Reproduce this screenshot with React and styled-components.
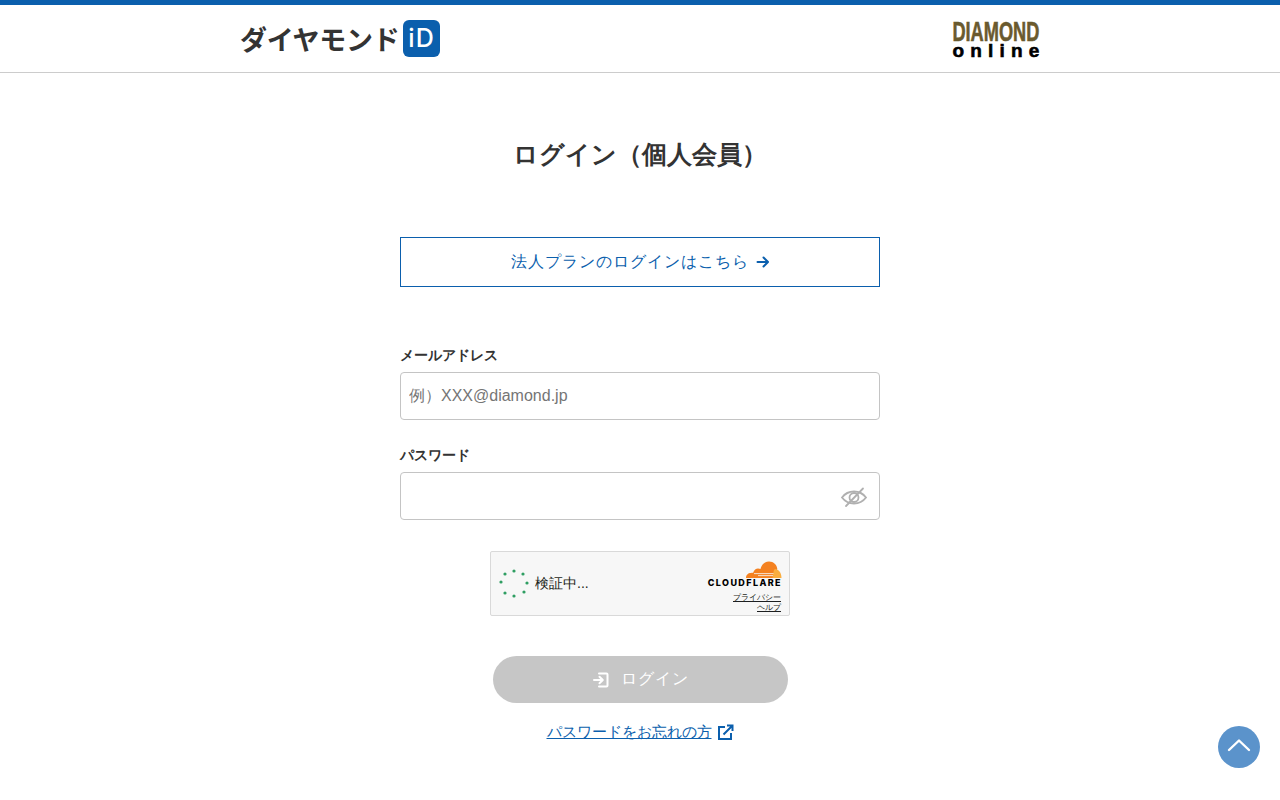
import React from "react";
import styled, { createGlobalStyle } from "styled-components";

const BLUE = "#0b5fad";
const FONT = `"Liberation Sans", sans-serif`;

const GlobalStyle = createGlobalStyle`
  html, body {
    margin: 0;
    padding: 0;
    background: #fff;
    color: #333;
    font-family: ${FONT};
  }
  * {
    box-sizing: border-box;
  }
`;

const Header = styled.header`
  height: 73px;
  border-top: 5px solid ${BLUE};
  border-bottom: 1px solid #ccc;
  display: flex;
  justify-content: center;
`;

const HeaderInner = styled.div`
  width: 800px;
  display: flex;
  align-items: center;
  justify-content: space-between;
`;

const IdLogo = styled.div`
  display: flex;
  align-items: center;
  gap: 5px;
  height: 37px;
`;

const IdLogoText = styled.span`
  width: 158px;
  padding-top: 1px;
  font-family: "Noto Sans CJK JP", sans-serif;
  font-size: 27px;
  line-height: 36px;
  font-weight: 700;
  color: #333;
  white-space: nowrap;
  letter-spacing: -0.3px;
`;

const IdBadge = styled.span`
  width: 37px;
  height: 37px;
  border-radius: 6px;
  background: ${BLUE};
  color: #fff;
  font-size: 25px;
  line-height: 37px;
  letter-spacing: 1px;
  text-align: center;
  font-family: "Inter", sans-serif;
  font-weight: 500;
`;

const OnlineLogo = styled.div`
  width: 88px;
  display: flex;
  flex-direction: column;
  align-items: center;
  margin-top: 2px;
`;

const OnlineTop = styled.span`
  font-weight: 700;
  font-size: 28px;
  line-height: 21px;
  height: 21px;
  color: #6a5a2e;
  transform: scaleX(0.65);
  -webkit-text-stroke: 0.6px #6a5a2e;
  white-space: nowrap;
`;

const OnlineBottom = styled.span`
  margin-top: 2px;
  font-weight: 700;
  font-size: 19px;
  line-height: 14px;
  color: #000;
  letter-spacing: 6.2px;
  margin-right: -6px;
  -webkit-text-stroke: 0.6px #000;
  white-space: nowrap;
`;

const Main = styled.main`
  width: 480px;
  margin: 0 auto;
  display: flex;
  flex-direction: column;
  align-items: center;
`;

const Title = styled.h1`
  margin: 63px 0 0;
  font-size: 25px;
  line-height: 36px;
  font-weight: 700;
  color: #333;
`;

const CorporateLink = styled.a`
  width: 100%;
  height: 50px;
  margin-top: 65px;
  border: 1px solid ${BLUE};
  color: ${BLUE};
  font-size: 16px;
  letter-spacing: 1px;
  display: flex;
  align-items: center;
  justify-content: center;
  gap: 7px;
  text-decoration: none;
`;

const Field = styled.div`
  width: 100%;
  margin-top: ${(props) => props.$top}px;
  display: flex;
  flex-direction: column;
`;

const Label = styled.label`
  font-size: 14px;
  line-height: 20px;
  font-weight: 700;
  color: #333;
  margin-bottom: 7px;
`;

const InputWrap = styled.div`
  position: relative;
`;

const Input = styled.input`
  width: 100%;
  height: 48px;
  padding: 0 8px;
  border: 1px solid #c4c4c4;
  border-radius: 4px;
  font-family: ${FONT};
  font-size: 16px;
  color: #333;
  background: #fff;

  &::placeholder {
    color: #757575;
    opacity: 1;
  }
`;

const EyeButton = styled.span`
  position: absolute;
  top: 13px;
  right: 13px;
  display: flex;
`;

const Turnstile = styled.div`
  width: 300px;
  height: 65px;
  margin-top: 31px;
  padding: 0 8px;
  border: 1px solid #d9d9d9;
  border-radius: 2px;
  background: #f7f7f7;
  display: flex;
  align-items: center;
  justify-content: space-between;
`;

const Verifying = styled.div`
  display: flex;
  align-items: center;
  gap: 6px;
  font-size: 14px;
  color: #1d1f20;
`;

const Brand = styled.div`
  display: flex;
  flex-direction: column;
  align-items: flex-end;
  align-self: flex-start;
  padding-top: 9px;
`;

const BrandMark = styled.div`
  display: flex;
  height: 17px;
  margin-right: -1px;
`;

const BrandName = styled.span`
  font-family: "Inter", "Liberation Sans", sans-serif;
  font-size: 9px;
  line-height: 10px;
  font-weight: 800;
  letter-spacing: 1.4px;
  margin-right: -1px;
  color: #000;
`;

const SmallLink = styled.a`
  font-size: 8px;
  line-height: 10px;
  color: #1d1f20;
  text-decoration: underline;
`;

const BrandLinks = styled.div`
  margin-top: 5px;
  display: flex;
  flex-direction: column;
  align-items: flex-end;
`;

const LoginButton = styled.button`
  width: 295px;
  height: 47px;
  margin-top: 40px;
  border: none;
  border-radius: 24px;
  background: #c6c6c6;
  color: #fff;
  font-family: ${FONT};
  font-size: 16px;
  letter-spacing: 1px;
  display: flex;
  align-items: center;
  justify-content: center;
  gap: 11px;
`;

const ForgotLink = styled.a`
  margin-top: 18px;
  color: ${BLUE};
  font-size: 15px;
  line-height: 22px;
  text-decoration: underline;
  display: flex;
  align-items: center;
  gap: 5px;
`;

const ScrollTop = styled.button`
  position: fixed;
  right: 20px;
  bottom: 32px;
  width: 42px;
  height: 42px;
  padding: 0 0 5px;
  border: none;
  border-radius: 50%;
  background: #5b93cb;
  display: flex;
  align-items: center;
  justify-content: center;
`;

const Spinner = () => {
  const dots = [
    [15, 3], [24, 6], [28, 15], [25, 24], [15, 28], [6, 25], [2, 14], [6, 6],
  ];
  return (
    <svg width="30" height="31" viewBox="0 0 30 31">
      {dots.map(([cx, cy]) => (
        <circle key={`${cx}-${cy}`} cx={cx} cy={cy} r="1.6" fill="#2f9e62" />
      ))}
    </svg>
  );
};

const CloudIcon = () => (
  <svg width="37" height="18" viewBox="0 0 37 18">
    <path
      d="M1 17c0-3 2-5 5-5 .7-.1 1.3-.2 2-.1C9 9 11 7.5 13 7.5c1 0 1.800.2 2.500.6C16.500 3.500 20 .5 24 .5c4.500 0 8 3.300 8.300 7.500L29 17z"
      fill="#f48120"
    />
    <path
      d="M30 8c3.500 0 6.500 3.500 6.500 9H27.500l1-6c.2-1.500.6-2.500 1.500-3z"
      fill="#faad3f"
    />
    <path d="M9 12.600h19.500M13 14.600h15" stroke="#f7f7f7" strokeWidth="0.8" />
  </svg>
);

const App = () => (
  <>
    <GlobalStyle />
    <Header>
      <HeaderInner>
        <IdLogo>
          <IdLogoText>ダイヤモンド</IdLogoText>
          <IdBadge>iD</IdBadge>
        </IdLogo>
        <OnlineLogo>
          <OnlineTop>DIAMOND</OnlineTop>
          <OnlineBottom>online</OnlineBottom>
        </OnlineLogo>
      </HeaderInner>
    </Header>
    <Main>
      <Title>ログイン（個人会員）</Title>
      <CorporateLink href="#">
        法人プランのログインはこちら
        <svg width="14" height="14" viewBox="0 0 14 14" fill="none">
          <path
            d="M1.500 7h10M7.500 2.500L12 7l-4.500 4.500"
            stroke={BLUE}
            strokeWidth="2"
            strokeLinecap="round"
            strokeLinejoin="round"
          />
        </svg>
      </CorporateLink>
      <Field $top={58}>
        <Label>メールアドレス</Label>
        <Input placeholder="例）XXX@diamond.jp" />
      </Field>
      <Field $top={25}>
        <Label>パスワード</Label>
        <InputWrap>
          <Input type="password" />
          <EyeButton>
            <svg width="26" height="24" viewBox="0 0 26 24" fill="none" stroke="#b0b0b0" strokeWidth="1.800" strokeLinecap="round">
              <path d="M1 12.500C4 8.500 8 6.500 13 6.500s9 2 12 6c-3 4-7 6-12 6s-9-2-12-6z" />
              <circle cx="13" cy="12.500" r="4.500" />
              <path d="M5 21L22 3.500" />
            </svg>
          </EyeButton>
        </InputWrap>
      </Field>
      <Turnstile>
        <Verifying>
          <Spinner />
          検証中...
        </Verifying>
        <Brand>
          <BrandMark>
            <CloudIcon />
          </BrandMark>
          <BrandName>CLOUDFLARE</BrandName>
          <BrandLinks>
            <SmallLink>プライバシー</SmallLink>
            <SmallLink>ヘルプ</SmallLink>
          </BrandLinks>
        </Brand>
      </Turnstile>
      <LoginButton disabled>
        <svg width="18" height="18" viewBox="0 0 18 18" fill="none" stroke="#fff" strokeWidth="2" strokeLinecap="round" strokeLinejoin="round">
          <path d="M7 2.500h7.500a1 1 0 0 1 1 1v11a1 1 0 0 1-1 1H7" />
          <path d="M2 9h8.500M7.500 5.800L10.800 9l-3.300 3.200" />
        </svg>
        ログイン
      </LoginButton>
      <ForgotLink href="#">
        パスワードをお忘れの方
        <svg width="17" height="17" viewBox="0 0 17 17" fill="none" stroke={BLUE} strokeWidth="2">
          <path d="M8 3H2v12h12V9" />
          <path d="M6.500 10.500L15 2M10 1.500h5.500V7" />
        </svg>
      </ForgotLink>
    </Main>
    <ScrollTop aria-label="ページ上部へ">
      <svg width="24" height="14" viewBox="0 0 24 14" fill="none" stroke="#fff" strokeWidth="2.400" strokeLinecap="round" strokeLinejoin="round">
        <path d="M2 12L12 2.500 22 12" />
      </svg>
    </ScrollTop>
  </>
);

export default App;
